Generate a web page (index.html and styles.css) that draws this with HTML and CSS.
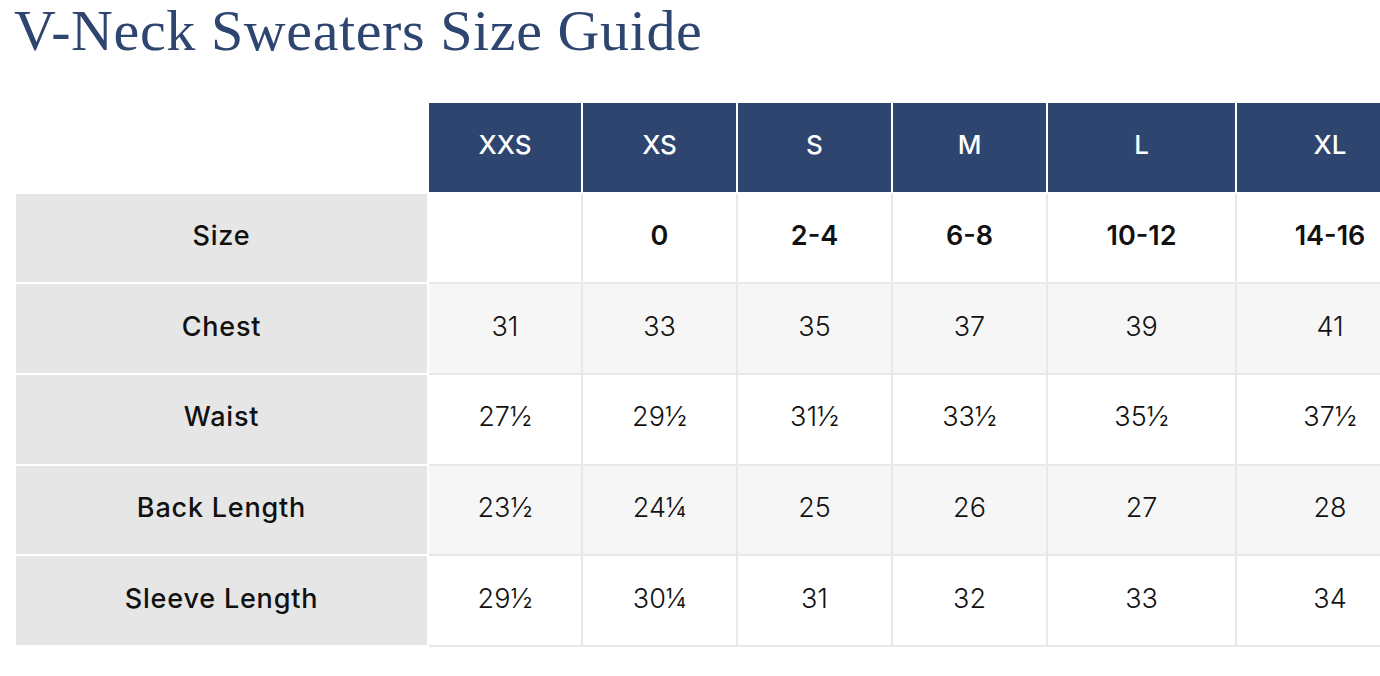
FILE: index.html
```html
<!DOCTYPE html>
<html lang="en">
<head>
<meta charset="utf-8">
<title>V-Neck Sweaters Size Guide</title>
<link rel="stylesheet" href="styles.css">
</head>
<body>
<h1 class="title">V-Neck Sweaters Size Guide</h1>
<div class="table-wrap">
<table class="size-table">
  <colgroup>
    <col class="c-label"><col class="c-sm"><col class="c-sm2"><col class="c-sm2"><col class="c-sm2"><col class="c-lg"><col class="c-xl">
  </colgroup>
  <thead>
    <tr>
      <th class="corner"></th>
      <th class="head">XXS</th>
      <th class="head">XS</th>
      <th class="head">S</th>
      <th class="head">M</th>
      <th class="head">L</th>
      <th class="head last">XL</th>
    </tr>
  </thead>
  <tbody>
    <tr class="row-white">
      <th class="label">Size</th>
      <td class="num bold"></td>
      <td class="num bold">0</td>
      <td class="num bold">2-4</td>
      <td class="num bold">6-8</td>
      <td class="num bold">10-12</td>
      <td class="num bold last">14-16</td>
    </tr>
    <tr class="row-alt">
      <th class="label">Chest</th>
      <td class="num">31</td>
      <td class="num">33</td>
      <td class="num">35</td>
      <td class="num">37</td>
      <td class="num">39</td>
      <td class="num last">41</td>
    </tr>
    <tr class="row-white">
      <th class="label">Waist</th>
      <td class="num">27½</td>
      <td class="num">29½</td>
      <td class="num">31½</td>
      <td class="num">33½</td>
      <td class="num">35½</td>
      <td class="num last">37½</td>
    </tr>
    <tr class="row-alt">
      <th class="label">Back Length</th>
      <td class="num">23½</td>
      <td class="num">24¼</td>
      <td class="num">25</td>
      <td class="num">26</td>
      <td class="num">27</td>
      <td class="num last">28</td>
    </tr>
    <tr class="row-white">
      <th class="label">Sleeve Length</th>
      <td class="num">29½</td>
      <td class="num">30¼</td>
      <td class="num">31</td>
      <td class="num">32</td>
      <td class="num">33</td>
      <td class="num last">34</td>
    </tr>
  </tbody>
</table>
</div>
</body>
</html>
```
FILE: styles.css
```css
html, body {
  margin: 0;
  padding: 0;
  background: #ffffff;
}

body {
  font-family: "Inter", "Noto Sans", sans-serif;
  color: #111111;
}

.title {
  margin: 0;
  padding-left: 14px;
  font-family: "Liberation Serif", "Times New Roman", serif;
  font-weight: 400;
  font-size: 58px;
  line-height: 62px;
  letter-spacing: 0.6px;
  color: #2e4570;
}

.table-wrap {
  margin-top: 41px;
  padding-left: 16px;
  overflow: hidden;
}

.size-table {
  border-collapse: separate;
  border-spacing: 0;
  table-layout: fixed;
  width: 1407px;
}

.c-label { width: 413px; }
.c-sm { width: 154px; }
.c-sm2 { width: 155px; }
.c-lg { width: 189px; }
.c-xl { width: 186px; }

.size-table tr {
  height: 90.7px;
}

.size-table th,
.size-table td {
  padding: 0 0 5px;
  text-align: center;
  vertical-align: middle;
}

.corner {
  background: transparent;
  border-right: 2px solid #ffffff;
  border-bottom: 2px solid #ffffff;
}

.head {
  background: #2e4570;
  color: #ffffff;
  font-size: 26px;
  font-weight: 500;
  border-right: 2px solid #ffffff;
  border-bottom: 2px solid #ffffff;
}

.head.last {
  border-right: none;
}

.label {
  background: #e6e6e6;
  color: #111111;
  font-size: 27px;
  font-weight: 500;
  letter-spacing: 0.8px;
  border-right: 2px solid #ffffff;
  border-bottom: 2px solid #ffffff;
}

.num {
  font-size: 27px;
  font-weight: 300;
  color: #111111;
  border-right: 2px solid #e8e8e8;
  border-bottom: 2px solid #e8e8e8;
}

.num.last {
  border-right: none;
}

.num.bold {
  font-weight: 600;
}

.row-white .num {
  background: #ffffff;
}

.row-alt .num {
  background: #f6f6f6;
}
```
